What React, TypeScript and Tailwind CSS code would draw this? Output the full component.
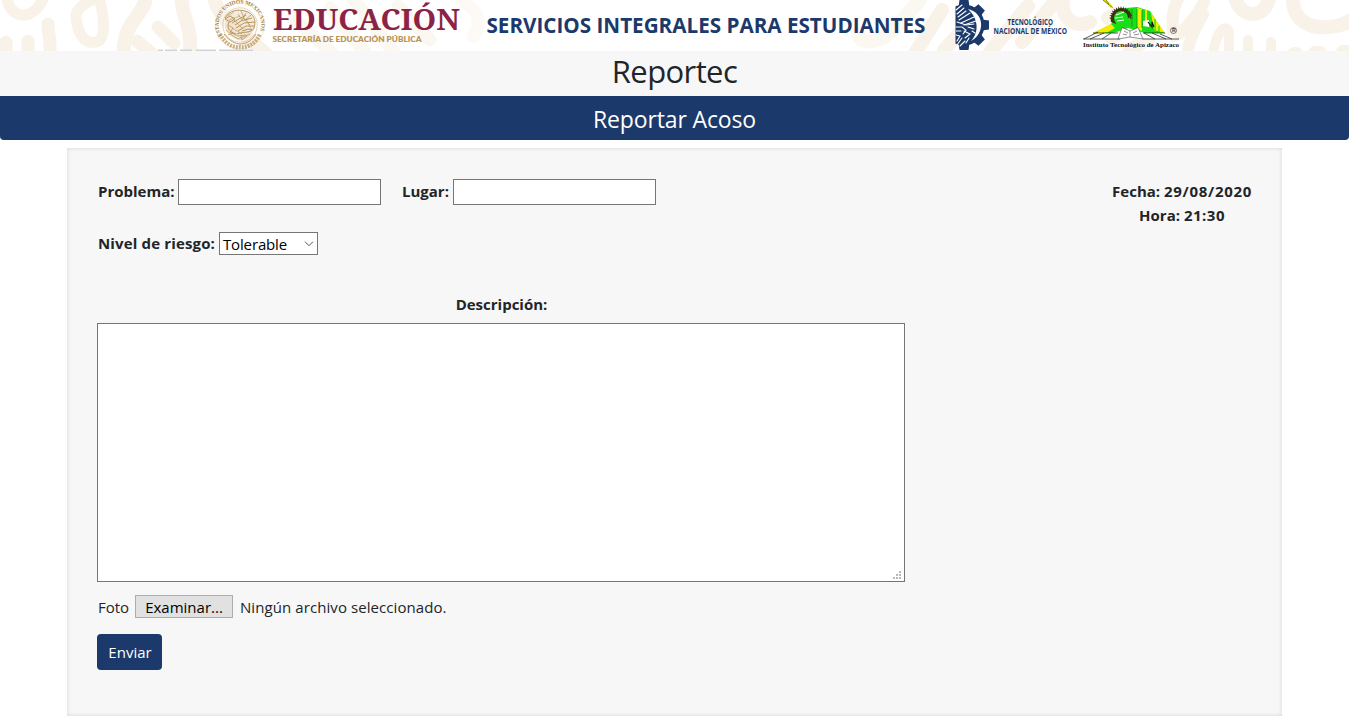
import React from "react";

const rays = Array.from({ length: 15 }, (_, i) => (i * 180) / 14 + 180);
const teeth = [0, 45, 90, 135, 180, 225, 270, 315];

function Pattern() {
  return (
    <g fill="none" stroke="#f9f2e9" strokeLinecap="round" strokeLinejoin="round">
      <g strokeWidth="13">
        <path d="M7 -2C10 20 34 22 44 -3" strokeWidth="11" />
        <path d="M6 42V56M28 41V56M48 24C48 34 51 40 50 56" />
        <path d="M76 15C77 38 88 46 99 41C107 34 103 8 98 -3M76 15C77 8 88 1 98 -3" strokeWidth="11" />
        <path d="M137 41L152 54M158 27L174 43" />
        <path d="M124 54C122 22 146 14 146 -4M182 -3C180 16 192 20 190 54" strokeWidth="14" />
        <path d="M214 -3C218 20 240 30 266 54" strokeWidth="14" />
        <path d="M292 17L340 60M330 8L366 54M351 -4L395 54M398 6L430 40" strokeOpacity=".65" />
        <path d="M464 2C474 8 485 20 473 36" strokeOpacity=".4" />
      </g>
      <g strokeWidth="14">
        <path d="M858 34C860 46 882 43 895 28L920 0" strokeOpacity=".65" />
        <path d="M912 58L942 10M944 50L967 25M990 52L1028 6M1022 42L1052 5" />
        <path d="M1063 -3C1060 18 1074 29 1090 22M1108 18C1125 8 1128 30 1112 38M1130 50L1148 39" />
        <path d="M1181 -6C1173 5 1171 20 1174 36C1182 34 1198 15 1204 2M1203 14C1196 28 1188 39 1187 58" strokeWidth="12" />
        <path d="M1213 56C1214 39 1224 20 1229 32V56M1248 40V56M1271 42V56" strokeWidth="10" />
        <path d="M1235 -3C1240 19 1266 21 1270 -5" />
        <path d="M1293 -2C1292 20 1310 29 1328 27C1339 27 1348 23 1356 17M1294 54H1296M1315 53H1320M1343 52H1350" />
      </g>
    </g>
  );
}

function NationalSeal() {
  return (
    <g fill="none" stroke="#b99457">
      <circle cx="240" cy="25" r="24.4" strokeWidth=".5" opacity=".4" />
      <circle cx="240" cy="25" r="17.2" strokeWidth=".6" opacity=".7" />
      <defs>
        <path id="seal-ring" d="M222 36A21.2 21.2 0 1 1 258 36" />
      </defs>
      <text fill="#a98345" stroke="none" fontFamily="Liberation Serif, serif" fontWeight="700" fontSize="5.6">
        <textPath href="#seal-ring" textLength="84">ESTADOS UNIDOS MEXICANOS</textPath>
      </text>
      <path d="M220 34C225 44 234 48 240 47C248 48 256 43 260 34" strokeWidth="4" strokeDasharray="2 1" opacity=".75" />
      <path d="M224 34C229 41 236 44 240 44C247 44 252 40 256 34" strokeWidth="1" />
      <circle cx="240" cy="25" r="15" fill="#d9c6a2" stroke="none" opacity=".35" />
      <g strokeWidth="1">
        <path d="M225 18C230 10 238 9 245 11C253 13 257 20 254 28C251 34 243 31 237 34M225 19L230 16L235 19L230 22L225 19" />
        <path d="M229 22C226 28 230 32 236 34M232 23L239 19L246 15M235 25L241 21L252 18M236 28L244 23L255 22M238 31L246 26L254 26M242 31L248 29L252 30" />
        <path d="M238 14L242 20L246 13M241 11L245 20L251 15M228 25L233 28L230 32L238 36L246 35M226 30L233 36L238 39L250 34M233 33L228 35M241 36L242 40L247 36" opacity=".75" />
        <path d="M227 16L234 12M229 20L240 16M243 18L250 25M234 20L243 29M246 19L252 31M232 28L242 34" opacity=".6" />
      </g>
    </g>
  );
}

function TecGear() {
  return (
    <g>
      <clipPath id="gear-half">
        <rect x="955.5" y="0" width="35" height="51" />
      </clipPath>
      <g fill="#1b396a" clipPath="url(#gear-half)">
        <circle cx="964" cy="25" r="20.5" />
        {teeth.map((a) => (
          <path key={a} transform={`rotate(${a} 964 25)`} d="M982 19.5L989 20.5V29.5L982 30.5Z" />
        ))}
      </g>
      <path d="M968 9C985 13 985 34 971 41C979 33 979 19 968 9Z" fill="#fff" />
      <g fill="none" stroke="#fff" strokeWidth="1.1" strokeLinecap="round" clipPath="url(#gear-half)">
        <path d="M962 5L956 10M964 8L957 14M966 11L958 17M970 13L959 20M974 17L961 23M976 21L964 25" />
        <path d="M957 22L966 25L974 24M955 27L962 27L966 30L963 34M956 31H961M968 27L974 29M956 35L960 36L957 41" />
        <path d="M964 31L970 34L965 38M962 38L957 45M965 41L960 46M969 38L966 43M972 31L975 33" />
      </g>
    </g>
  );
}

function ApizacoLogo() {
  return (
    <g>
      <path d="M1101 -3L1112 7" stroke="#f1ec00" strokeWidth="2.5" />
      <path d="M1103 0L1113 8M1106 0L1109 4" stroke="#222" strokeWidth=".5" />
      <path d="M1093 33L1110 25L1126 8L1137 7L1150 11L1165 34H1148L1128 28L1108 35Z" fill="#18df18" />
      <path d="M1093 33L1111 24L1115 28L1108 32L1098 34ZM1137 8L1142 9V31L1137 29ZM1151 13L1165 33L1154 30ZM1145 10H1147V25H1145Z" fill="#f1ec00" />
      <path d="M1155 19V30M1159 26V32" stroke="#18df18" strokeWidth="1.2" />
      <path d="M1132 9V27M1137 9V28M1142 10V28" stroke="#0c9e18" strokeWidth=".9" />
      <path d="M1143 21L1149 20V27L1143 26Z" fill="#fff" />
      <path d="M1111 22A10.5 10.5 0 0 1 1132 16L1127 19A6 6 0 0 0 1116 24Z" fill="#362f10" />
      {rays.map((a) => (
        <path key={a} transform={`rotate(${a} 1121 18)`} d="M1130 17L1133 18L1130 19Z" fill="#473b12" />
      ))}
      <circle cx="1121" cy="18" r="7" fill="#18df18" />
      <path d="M1116 15L1124 12M1115 18L1123 17M1117 21L1124 20" stroke="#fff" />
      <path d="M1148 22L1152 27V22L1154 27" fill="none" stroke="#111" strokeWidth="1.2" />
      <path d="M1095 33H1164L1178 39H1083Z" fill="#fff" />
      <g fill="none" stroke="#222" strokeWidth=".75">
        <path d="M1083 39H1120M1143 39H1179M1098 32L1084 39M1104 33L1090 39M1111 33L1102 39M1152 33L1166 39M1144 33L1155 39M1160 34L1172 39M1093 33H1118M1143 33H1165" />
        <path d="M1122 27.5L1130 31L1138 27.5L1143 39L1130 37L1118 39Z" fill="#fff" strokeWidth=".5" />
        <path d="M1130 31V37M1124 31L1128 33M1123 34L1127 35M1133 33L1137 31M1134 35L1139 34" strokeWidth=".5" />
      </g>
      <circle cx="1173.5" cy="30.5" r="3" fill="none" stroke="#333" strokeWidth=".65" />
      <text x="1171.9" y="32.4" fontFamily="Liberation Sans, sans-serif" fontSize="5" fontWeight="700" fill="#333">R</text>
      <text x="1083" y="47.2" fontFamily="Liberation Serif, serif" fontSize="7" fontWeight="700" fill="#111" textLength="96" lengthAdjust="spacingAndGlyphs">Instituto Tecnológico de Apizaco</text>
    </g>
  );
}

function Banner() {
  return (
    <svg className="block h-[51px] w-full bg-white" viewBox="0 0 1349 51" preserveAspectRatio="none">
      <Pattern />
      <path d="M158 50.3H163M165 50.3H177M180 50.3H192M196 50.3H216M219 50.3H253" stroke="#d3d3d5" strokeWidth="1.4" />
      <NationalSeal />
      <text x="273" y="29.5" fontFamily="'Noto Serif', 'DejaVu Serif', serif" fontSize="29" fontWeight="700" fill="#8b2346" textLength="187" lengthAdjust="spacingAndGlyphs">EDUCACIÓN</text>
      <text x="272.5" y="42.3" fontFamily="Lato, sans-serif" fontSize="6.6" fontWeight="800" fill="#b9955a" textLength="149" lengthAdjust="spacingAndGlyphs">SECRETARÍA DE EDUCACIÓN PÚBLICA</text>
      <text x="486.5" y="33" fontFamily="'Open Sans', sans-serif" fontSize="21" fontWeight="700" fill="#1b396a" textLength="439" lengthAdjust="spacingAndGlyphs">SERVICIOS INTEGRALES PARA ESTUDIANTES</text>
      <TecGear />
      <g fontFamily="'Open Sans', sans-serif" fontSize="8.4" fontWeight="700" fill="#1b396a">
        <text x="1007.5" y="24.5" textLength="45.5" lengthAdjust="spacingAndGlyphs">TECNOLÓGICO</text>
        <text x="993.5" y="33.7" textLength="73.5" lengthAdjust="spacingAndGlyphs">NACIONAL DE MÉXICO</text>
      </g>
      <ApizacoLogo />
    </svg>
  );
}

export default function App() {
  return (
    <div className="h-[716px] overflow-hidden bg-white font-['Open_Sans','Noto_Sans',sans-serif] text-base text-[#212529]">
      <header>
        <Banner />
        <h1 className="h-[45px] bg-[#f7f7f7] text-center text-[31px] leading-[41px] tracking-[-0.6px]">Reportec</h1>
        <h2 className="h-11 rounded-b bg-[#1b396a] text-center text-[23px] leading-[47px] tracking-[-0.15px] text-white">Reportar Acoso</h2>
      </header>

      <main className="mx-[67px] mt-2 h-[568px] bg-[#f7f7f7] pt-[31px] pr-[30px] pl-[30px] shadow-[inset_0_0_4px_rgba(0,0,0,0.14)]">
        <div className="flex justify-between">
          <div className="flex h-[26px] items-center font-bold">
            <label htmlFor="problema" className="w-[81px] pb-0.5 pl-px text-[15px] whitespace-nowrap">Problema:</label>
            <input id="problema" className="h-[26px] w-[203px] border border-[#767676] bg-white px-1 outline-none" />
            <label htmlFor="lugar" className="ml-5 w-[52px] pb-0.5 pl-px text-[15px] whitespace-nowrap">Lugar:</label>
            <input id="lugar" className="h-[26px] w-[203px] border border-[#767676] bg-white px-1 outline-none" />
          </div>
          <div className="h-[53px] text-center text-[15px] leading-6 font-bold">
            <p>Fecha: <span className="tracking-[0.7px]">29/08/2020</span></p>
            <p>Hora: <span className="tracking-[0.5px]">21:30</span></p>
          </div>
        </div>

        <div className="flex h-[23px] items-center">
          <span className="w-[122px] pl-px text-[15px] font-bold tracking-[0.15px] whitespace-nowrap">Nivel de riesgo:</span>
          <button className="flex h-[23px] w-[99px] items-center justify-between border border-[#767676] bg-white pr-[3px] pl-[3px] text-[15px] text-black">
            <span className="pt-px tracking-[-0.15px]">Tolerable</span>
            <svg className="h-[6px] w-[10px]" viewBox="0 0 10 6" fill="none" stroke="#555">
              <path d="M1 .7L5 4.7L9 .7" />
            </svg>
          </button>
        </div>

        <div className="mt-[37px] w-[808px]">
          <label htmlFor="descripcion" className="block h-[31px] pl-px text-center text-[15px] leading-6 font-bold">Descripción:</label>
          <div className="flex h-[259px] border border-[#767676] bg-white">
            <textarea id="descripcion" className="h-full flex-1 resize-none bg-transparent p-1 outline-none" />
            <svg className="mr-[3px] mb-[2px] h-2 w-2 self-end" viewBox="0 0 8 8" fill="#b8b8b8">
              <path d="M6 0H8V2H6ZM3 3H5V5H3ZM6 3H8V5H6ZM0 6H2V8H0ZM3 6H5V8H3ZM6 6H8V8H6Z" />
            </svg>
          </div>
        </div>

        <div className="mt-[13px] flex h-[23px] items-center text-[15px]">
          <span className="w-[38px] pt-0.5 pl-px">Foto</span>
          <button className="h-[23px] w-[98px] border border-[#adadad] bg-[#e1e1e1] leading-[22px] text-black">Examinar...</button>
          <span className="ml-[7px] pt-0.5 tracking-[0.08px] whitespace-nowrap">Ningún archivo seleccionado.</span>
        </div>
        <button className="mt-4 h-9 w-[65px] rounded bg-[#1b396a] pl-px text-[15px] text-white">Enviar</button>
      </main>
    </div>
  );
}
